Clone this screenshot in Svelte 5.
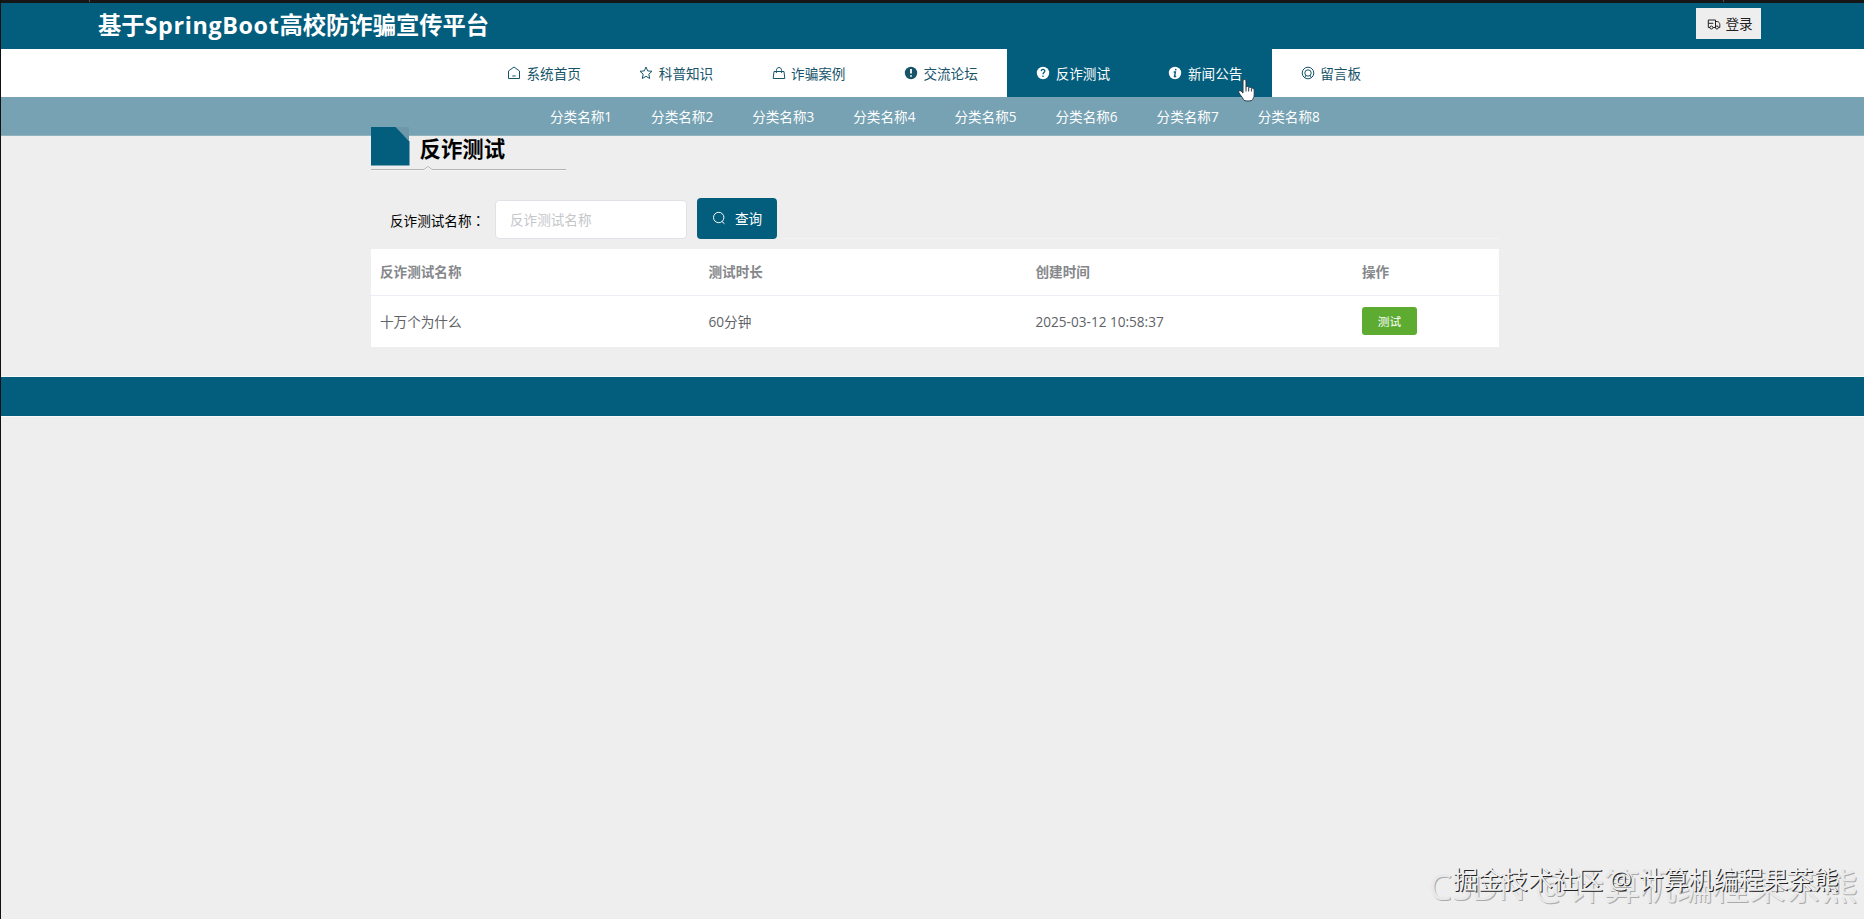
<script>
  const nav = [
    { label: '系统首页', icon: 'home' },
    { label: '科普知识', icon: 'star' },
    { label: '诈骗案例', icon: 'bag' },
    { label: '交流论坛', icon: 'warn' },
    { label: '反诈测试', icon: 'question', active: true },
    { label: '新闻公告', icon: 'info', active: true },
    { label: '留言板', icon: 'ring' }
  ];
  const categories = [1, 2, 3, 4, 5, 6, 7, 8].map((n) => `分类名称${n}`);
</script>

{#snippet glyph(name)}
  <svg class="icon" viewBox="0 0 14 14" fill="none" stroke="currentColor" stroke-width="1">
    {#if name === 'home'}
      <path d="M1.500 5 7 1l5.500 4v7.500h-11zM5.300 10h3.400" />
    {:else if name === 'star'}
      <path d="m7 1 1.700 3.900 4.300.4-3.200 2.900.9 4.300L7 10.300l-3.700 2.200.9-4.300L1 5.300l4.300-.4z" />
    {:else if name === 'bag'}
      <path d="M2 5.500h10l.8 7H1.200zM4.400 7V4.500C4.400.5 9.600.5 9.600 4.500V7" />
    {:else if name === 'warn'}
      <circle cx="7" cy="7" r="6.200" fill="currentColor" stroke="none" />
      <path d="M7 3v4.600M7 9.300v1.500" stroke="#fff" stroke-width="1.800" />
    {:else if name === 'question'}
      <circle cx="7" cy="7" r="6.200" fill="currentColor" stroke="none" />
      <path d="M5.200 5.100C5.400 2.700 9 3 8.800 5.200 8.700 6.500 7 6.500 7 8.300M7 9.500v1.400" stroke="#035d7c" stroke-width="1.300" />
    {:else if name === 'info'}
      <circle cx="7" cy="7" r="6.200" fill="currentColor" stroke="none" />
      <path d="M7.900 2.900 7.600 4.300M5.700 6h1.700l-.9 4.500h1.700" stroke="#035d7c" stroke-width="1.400" />
    {:else if name === 'ring'}
      <circle cx="7" cy="7" r="5.800" />
      <circle cx="7" cy="7" r="3.200" />
      <path d="m3.500 12 1.500-2.700M10.500 12 9 9.300" />
    {:else if name === 'truck'}
      <path d="M3 10.500H1.300V3h7.200v7.500H6M8.500 4.500h1.800c1.600.3 2.500 1.500 2.500 3v3h-1.300M1.300 6.300h5" />
      <circle cx="4.400" cy="10.500" r="1.500" />
      <circle cx="9.900" cy="10.500" r="1.500" />
    {:else if name === 'search'}
      <circle cx="6.700" cy="6.500" r="5.200" />
      <path d="m10 10.500 2.500 2.300" />
    {/if}
  </svg>
{/snippet}

<div class="page">
  <div class="edge"><i></i><i></i></div>
  <header>
    <h1>基于<span class="latin">SpringBoot</span>高校防诈骗宣传平台</h1>
    <button class="login">{@render glyph('truck')}<span>登录</span></button>
  </header>
  <nav>
    {#each nav as item}
      <a class:active={item.active}>{@render glyph(item.icon)}<span>{item.label}</span></a>
    {/each}
    <svg class="pointer" viewBox="0 0 18 24">
      <path d="M5 2c0-2 3-2 3 0v6c1-1 2.500-.5 2.700.6 1-.8 2.500-.3 2.700.8 1.200-.7 2.800 0 2.800 1.600v5c0 2-1 3-1.500 4.500-.4 2-9 2-9.300 0C4.500 18 1.500 15.500.8 13.500c-.5-1.800 1.200-2.500 2.500-1.200L5 14z" fill="#fff" stroke="#273b46" />
      <path d="M8 8v4.500M10.700 9v3.500M13.400 10v2.500" stroke="#273b46" fill="none" />
    </svg>
  </nav>
  <div class="categories">
    {#each categories as c}<span>{c}</span>{/each}
  </div>
  <main>
    <div class="title">
      <div class="caption">
        <svg class="fold" viewBox="0 0 39 39">
          <path d="M24 0h14v14z" fill="#6e98aa" />
          <path d="M0 0h24.500L38.500 14.500V38.500H0z" fill="#035d7c" />
        </svg>
        <h2>反诈测试</h2>
      </div>
      <svg class="rule" viewBox="0 0 195 6" fill="none">
        <path d="M0 4.500h53l4-3 4 3h134" stroke="#b4b4b4" />
        <path d="M0 5.500h53l4-3 4 3h134" stroke="#fafafa" stroke-opacity=".6" />
      </svg>
    </div>
    <form>
      <label for="q">反诈测试名称<span class="colon">：</span></label>
      <input id="q" placeholder="反诈测试名称" />
      <button type="button" class="query">{@render glyph('search')}<span>查询</span></button>
      <div class="line"></div>
    </form>
    <div class="table">
      <div class="row head"><span>反诈测试名称</span><span>测试时长</span><span>创建时间</span><span>操作</span></div>
      <div class="row"><span>十万个为什么</span><span>60分钟</span><span class="date">2025-03-12 10:58:37</span><span class="action"><button>测试</button></span></div>
    </div>
  </main>
  <footer></footer>
  <div class="mark back">CSDN @计算机编程果茶熊</div>
  <div class="mark front">掘金技术社区 @ 计算机编程果茶熊</div>
</div>

<style>
  :global(body) { background: #eee; overflow: hidden; }
  .page {
    position: relative;
    width: 1864px;
    height: 919px;
    border-left: 1px solid #111;
    overflow: hidden;
    background: #eee;
    font-size: 13.600px;
    font-family: 'Open Sans', 'Noto Sans CJK SC', sans-serif;
    color: #111;
  }
  * { box-sizing: border-box; }
  button, input { font: inherit; border: 0; padding: 0; }
  span, label, h1, h2 { white-space: nowrap; }
  .icon { width: 14px; height: 14px; flex: none; }
  .edge { height: 3px; background: #161616; display: flex; padding: 0 140px 0 88px; justify-content: space-between; }
  .edge i { width: 1px; height: 2px; background: #555; }
  header {
    height: 46px;
    background: #035d7c;
    display: flex;
    justify-content: space-between;
    padding: 0 103px 0 97px;
  }
  h1 { margin: 0; color: #fff; font-size: 23.300px; line-height: 44px; font-weight: 700; }
  .latin { letter-spacing: .65px; }
  .login {
    width: 65px;
    height: 31px;
    margin-top: 5px;
    background: #eee;
    color: #222;
    display: flex;
    align-items: center;
    justify-content: center;
    gap: 4px;
    padding: 0 0 2px 3px;
  }
  .login .icon { margin-top: 2px; }
  nav {
    position: relative;
    height: 48px;
    background: #fff;
    display: flex;
    padding-left: 477px;
  }
  nav a {
    width: 132.300px;
    display: flex;
    align-items: center;
    padding: 0 0 0 29px;
    gap: 5.500px;
    color: #17546a;
  }
  nav a.active { background: #035d7c; color: #fff; }
  .pointer { position: absolute; left: 1237px; top: 30px; width: 18px; height: 24px; }
  .categories {
    height: 39px;
    background: #76a2b3;
    border-bottom: 1px solid #91b3c0;
    color: #fff;
    display: flex;
    padding: 0 0 0 549px;
    line-height: 39px;
  }
  .categories span { width: 101.100px; }
  main { width: 1128px; margin-left: 370px; height: 250px; margin-top: -9px; }
  .title { height: 43px; position: relative; display: flex; flex-direction: column; }
  .caption { display: flex; gap: 9.500px; height: 38px; }
  .fold { width: 39px; height: 39px; flex: none; }
  h2 { margin: 0; font-size: 21.400px; line-height: 43px; height: 38px; color: #000; }
  .rule { width: 195px; height: 6px; flex: none; }
  form { height: 79px; display: flex; padding: 28px 0 0 19px; color: #000; }
  label { width: 105px; line-height: 44px; }
  .colon { font-family: 'Noto Sans CJK TC', sans-serif; }
  input {
    width: 192px;
    height: 39px;
    margin-top: 2px;
    padding: 0 14px;
    border: 1px solid #dfe2e6;
    border-radius: 4px;
    background: #fff;
  }
  input::placeholder { color: #c4c6ca; }
  .query {
    width: 80px;
    height: 41px;
    margin-left: 10px;
    border-radius: 4px;
    background: #035d7c;
    color: #fff;
    display: flex;
    align-items: center;
    justify-content: center;
    gap: 9px;
    padding-bottom: 1px;
  }
  .line { flex: 1; margin-left: 6px; height: 41px; border-bottom: 1px solid #f4f4f4; }
  .table { background: #fff; height: 98px; color: #606266; }
  .row { display: grid; grid-template-columns: 328.500px 327px 326.500px 1fr; padding-left: 9px; height: 51px; line-height: 51px; }
  .head { height: 47px; line-height: 46px; border-bottom: 1px solid #ebeef5; color: #85878b; font-weight: 700; }
  .action button {
    display: block;
    width: 55px;
    height: 28px;
    margin-top: 11px;
    border-radius: 3px;
    background: #5dac31;
    color: #fff;
    font-size: 11.700px;
    line-height: 26px;
  }
  footer { height: 39px; background: #035d7c; box-shadow: 0 1px #f8fbfc, 0 -1px #f8fbfc; }
  .mark { position: absolute; white-space: nowrap; line-height: 1; }
  .back { left: 1428px; top: 868px; font-size: 36.300px; color: #e9e9e9; text-shadow: 1px 1px #aaa; }
  .front { left: 1452px; top: 867px; font-size: 25px; color: #eee; text-shadow: 1px 1px #222; }
</style>
